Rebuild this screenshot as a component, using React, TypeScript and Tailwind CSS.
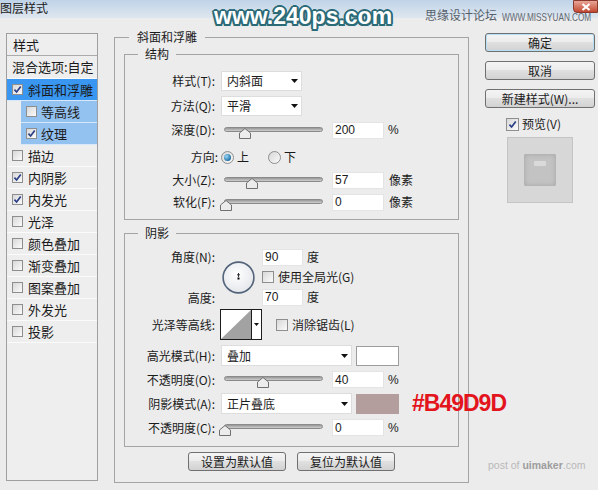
import type { ReactNode } from "react";

type Effect = { label: string; checked?: boolean; kind?: "active" | "sub" };

const effects: Effect[] = [
  { label: "斜面和浮雕", checked: true, kind: "active" },
  { label: "等高线", kind: "sub" },
  { label: "纹理", checked: true, kind: "sub" },
  { label: "描边" },
  { label: "内阴影", checked: true },
  { label: "内发光", checked: true },
  { label: "光泽" },
  { label: "颜色叠加" },
  { label: "渐变叠加" },
  { label: "图案叠加" },
  { label: "外发光" },
  { label: "投影" },
];

function Checkbox({ checked = false, className = "size-[12px]" }: { checked?: boolean; className?: string }) {
  return (
    <span
      className={`flex shrink-0 items-center justify-center border border-[#8e8e8e] bg-linear-to-br from-[#d8d8d8] to-[#fbfbfb] ${className}`}
    >
      {checked && (
        <svg viewBox="0 0 10 10" className="size-[9px]">
          <path d="M1.6 5.2 L4 7.8 L8.6 1.6" fill="none" stroke="#2a3f86" strokeWidth="1.9" />
        </svg>
      )}
    </span>
  );
}

function Radio({ checked = false }: { checked?: boolean }) {
  return (
    <span className="flex size-[13px] shrink-0 items-center justify-center rounded-full border border-[#8e8e8e] bg-linear-to-br from-[#d6d6d6] to-[#fbfbfb]">
      {checked && (
        <span className="size-[7px] rounded-full bg-[radial-gradient(circle_at_35%_35%,#9ad8f7,#1b6aa0_75%)]" />
      )}
    </span>
  );
}

function Caret() {
  return (
    <svg width="7" height="4" viewBox="0 0 7 4" className="shrink-0">
      <path d="M0 0H7L3.5 4Z" fill="#111" />
    </svg>
  );
}

function Select({ value, className }: { value: string; className: string }) {
  return (
    <div
      className={`flex shrink-0 items-center justify-between border border-[#dddddd] bg-white pl-[5px] pr-[3px] ${className}`}
    >
      <span>{value}</span>
      <Caret />
    </div>
  );
}

function NumField({ value, className = "w-[52px]" }: { value: string; className?: string }) {
  return (
    <div
      className={`flex h-[17px] shrink-0 items-center border border-[#e4e4e4] bg-white pl-[2px] font-['Liberation_Sans',sans-serif] text-[12px] ${className}`}
    >
      {value}
    </div>
  );
}

// pos = thumb centre, px from the start of the track
function Slider({ pos }: { pos: number }) {
  return (
    <div className="relative ml-[9px] h-[17px] w-[99px] shrink-0">
      <div className="mt-[5px] h-[5px] rounded-full border border-[#8a8a8a] bg-linear-to-b from-[#979797] to-[#cfcfcf]" />
      <svg className="absolute top-[6px] h-[11px] w-[12px]" style={{ left: pos - 6 }} viewBox="0 0 12 11">
        <path d="M6 0.5 L11.5 5 L11.5 10.5 L0.5 10.5 L0.5 5 Z" fill="#ececec" stroke="#707070" />
      </svg>
    </div>
  );
}

function Label({ children, className = "w-[90px]" }: { children: ReactNode; className?: string }) {
  return <span className={`shrink-0 text-right ${className}`}>{children}</span>;
}

function Box({ legend, className, children }: { legend: string; className: string; children: ReactNode }) {
  return (
    <div className={`relative flex flex-col border border-[#a4a4a4] ${className}`}>
      <span className="absolute -top-[9px] left-[13px] bg-[#ececec] px-[7px] leading-[16px]">{legend}</span>
      {children}
    </div>
  );
}

function Btn({ children, className }: { children: ReactNode; className: string }) {
  return (
    <div
      className={`flex shrink-0 items-center justify-center rounded-[3px] border border-[#707070] bg-[linear-gradient(#f4f4f4,#ececec_45%,#e0e0e0_50%,#d2d2d2)] leading-none ${className}`}
    >
      {children}
    </div>
  );
}

function EffectRow({ label, checked, kind }: Effect) {
  if (kind === "sub") {
    return (
      <div className="flex h-[22px] shrink-0 pl-[14px]">
        <div className="flex flex-1 items-center border-b border-[#d6e8fa] bg-[#93c1f0] pl-[5px]">
          <Checkbox checked={checked} className="size-[11px]" />
          <span className="ml-[4px]">{label}</span>
        </div>
      </div>
    );
  }
  return (
    <div
      className={
        kind === "active"
          ? "flex h-[22px] shrink-0 items-center border-b border-[#d6e8fa] bg-[#3996f1] pl-[5px]"
          : "flex h-[22px] shrink-0 items-center border-b border-[#fbfbfb] pl-[5px]"
      }
    >
      <Checkbox checked={checked} className="size-[11px]" />
      <span className="ml-[5px]">{label}</span>
    </div>
  );
}

function Dial() {
  return (
    <svg width="33" height="33" viewBox="0 0 33 33" className="shrink-0 self-center">
      <defs>
        <radialGradient id="dial" cx="45%" cy="40%" r="65%">
          <stop offset="0" stopColor="#ffffff" />
          <stop offset="1" stopColor="#e2e5ea" />
        </radialGradient>
      </defs>
      <circle cx="16.5" cy="16.5" r="15.4" fill="url(#dial)" stroke="#53647a" strokeWidth="1.6" />
      <path d="M16.5 12 V16 M15 13.8 H18" stroke="#333" strokeWidth="1" />
      <rect x="15.5" y="16.5" width="2" height="2" fill="#000" />
    </svg>
  );
}

function Contour() {
  return (
    <div className="ml-[5px] flex h-[31px] w-[42px] shrink-0 border border-[#1c1c1c] bg-white">
      <svg className="h-full w-[30px]" viewBox="0 0 30 29" preserveAspectRatio="none">
        <path d="M0 29 L30 0 L30 29 Z" fill="#a2a2a2" />
      </svg>
      <div className="flex flex-1 items-center justify-center border-l border-[#1c1c1c]">
        <svg width="5" height="3" viewBox="0 0 5 3">
          <path d="M0 0H5L2.5 3Z" fill="#111" />
        </svg>
      </div>
    </div>
  );
}

export default function App() {
  return (
    <div className="relative h-[490px] w-[598px] overflow-hidden bg-[#ececec] font-['Noto_Sans_CJK_SC',sans-serif] text-[12px] text-[#1b1b1b]">
      {/* title bar */}
      <div className="flex h-[18px] items-start justify-between bg-linear-to-b from-[#bfd3e8] to-[#dfe7ef]">
        <span className="leading-[15px] text-[#202020]">图层样式</span>
        <div className="flex h-[13px] w-[25px] items-center justify-center rounded-bl-[4px] border border-[#8a3a2c] bg-linear-to-b from-[#e8a597] to-[#c14630]">
          <svg width="10" height="8" viewBox="0 0 10 8">
            <path d="M1.5 1 L8.5 7 M8.5 1 L1.5 7" stroke="#fff" strokeWidth="2.2" />
          </svg>
        </div>
      </div>

      <div className="flex items-start pt-[15px]">
        {/* effect list */}
        <div className="ml-[6px] flex h-[448px] w-[92px] shrink-0 flex-col border border-[#9f9f9f] bg-[#eeeeee] text-[13px]">
          <div className="flex h-[22px] shrink-0 items-center border-b border-[#ababab] pl-[6px]">样式</div>
          <div className="flex h-[23px] shrink-0 items-center border-b border-[#fbfbfb] pl-[5px]">混合选项:自定</div>
          {effects.map((e) => (
            <EffectRow key={e.label} {...e} />
          ))}
        </div>

        {/* bevel & emboss */}
        <div className="relative ml-[16px] mt-[4px] flex h-[446px] w-[355px] shrink-0 flex-col border border-[#a4a4a4] px-[9px] pt-[16px]">
          <span className="absolute -top-[9px] left-[14px] bg-[#ececec] px-[8px] leading-[16px]">斜面和浮雕</span>

          <Box legend="结构" className="h-[166px] pt-[16px]">
            <div className="flex h-[20px] items-center">
              <Label>样式(T):</Label>
              <Select value="内斜面" className="ml-[6px] h-[20px] w-[81px]" />
            </div>
            <div className="mt-[5px] flex h-[20px] items-center">
              <Label>方法(Q):</Label>
              <Select value="平滑" className="ml-[6px] h-[20px] w-[81px]" />
            </div>
            <div className="mt-[5px] flex h-[18px] items-center">
              <Label>深度(D):</Label>
              <Slider pos={21} />
              <NumField value="200" className="ml-[9px] w-[52px]" />
              <span className="ml-[4px] font-['Liberation_Sans',sans-serif]">%</span>
            </div>
            <div className="mt-[9px] flex h-[18px] items-center">
              <Label className="w-[93px]">方向:</Label>
              <span className="ml-[3px]">
                <Radio checked />
              </span>
              <span className="ml-[3px]">上</span>
              <span className="ml-[19px]">
                <Radio />
              </span>
              <span className="ml-[3px]">下</span>
            </div>
            <div className="mt-[5px] flex h-[18px] items-center">
              <Label>大小(Z):</Label>
              <Slider pos={28} />
              <NumField value="57" className="ml-[9px] w-[52px]" />
              <span className="ml-[5px]">像素</span>
            </div>
            <div className="mt-[4px] flex h-[18px] items-center">
              <Label>软化(F):</Label>
              <Slider pos={2} />
              <NumField value="0" className="ml-[9px] w-[52px]" />
              <span className="ml-[5px]">像素</span>
            </div>
          </Box>

          <Box legend="阴影" className="mt-[13px] h-[214px] pt-[14px]">
            <div className="flex h-[58px]">
              <div className="flex w-[90px] shrink-0 flex-col justify-between text-right leading-[17px]">
                <span>角度(N):</span>
                <span>高度:</span>
              </div>
              <span className="ml-[7px] flex items-center">
                <Dial />
              </span>
              <div className="ml-[7px] flex flex-col justify-between">
                <div className="flex items-center">
                  <NumField value="90" className="w-[41px]" />
                  <span className="ml-[4px]">度</span>
                </div>
                <div className="flex items-center">
                  <Checkbox />
                  <span className="ml-[4px]">使用全局光(G)</span>
                </div>
                <div className="flex items-center">
                  <NumField value="70" className="w-[41px]" />
                  <span className="ml-[4px]">度</span>
                </div>
              </div>
            </div>
            <div className="mt-[3px] flex h-[31px] items-center">
              <Label>光泽等高线:</Label>
              <Contour />
              <span className="ml-[14px]">
                <Checkbox />
              </span>
              <span className="ml-[4px]">消除锯齿(L)</span>
            </div>
            <div className="mt-[5px] flex h-[21px] items-center">
              <Label>高光模式(H):</Label>
              <Select value="叠加" className="ml-[6px] h-[21px] w-[131px]" />
              <div className="ml-[4px] h-[20px] w-[43px] shrink-0 border border-[#9c9c9c] bg-white" />
            </div>
            <div className="mt-[5px] flex h-[17px] items-center">
              <Label>不透明度(O):</Label>
              <Slider pos={39} />
              <NumField value="40" className="ml-[9px] w-[52px]" />
              <span className="ml-[4px] font-['Liberation_Sans',sans-serif]">%</span>
            </div>
            <div className="mt-[5px] flex h-[21px] items-center">
              <Label>阴影模式(A):</Label>
              <Select value="正片叠底" className="ml-[6px] h-[21px] w-[131px]" />
              <div className="ml-[4px] h-[20px] w-[43px] shrink-0 bg-[#b49d9d]" />
              <span className="ml-[13px] shrink-0 whitespace-nowrap font-['Liberation_Sans',sans-serif] text-[23px] font-bold leading-none tracking-[-1px] text-[#e3141c]">
                #B49D9D
              </span>
            </div>
            <div className="mt-[5px] flex h-[17px] items-center">
              <Label>不透明度(C):</Label>
              <Slider pos={1} />
              <NumField value="0" className="ml-[9px] w-[52px]" />
              <span className="ml-[4px] font-['Liberation_Sans',sans-serif]">%</span>
            </div>
          </Box>

          <div className="mt-[5px] flex h-[19px] pl-[64px]">
            <Btn className="h-[19px] w-[98px]">设置为默认值</Btn>
            <Btn className="ml-[11px] h-[19px] w-[98px]">复位为默认值</Btn>
          </div>
        </div>

        {/* right column */}
        <div className="ml-[16px] flex w-[110px] shrink-0 flex-col">
          <Btn className="h-[19px] w-[110px] border-[#3a88ba] shadow-[inset_0_0_0_1px_#b3e0f5]">确定</Btn>
          <Btn className="mt-[9px] h-[19px] w-[110px]">取消</Btn>
          <Btn className="mt-[9px] h-[19px] w-[110px]">新建样式(W)...</Btn>
          <div className="mt-[9px] flex h-[14px] items-center pl-[21px]">
            <Checkbox checked className="size-[13px]" />
            <span className="ml-[3px]">预览(V)</span>
          </div>
          <div className="ml-[22px] mt-[6px] flex h-[66px] w-[66px] items-center justify-center border border-[#c4c4c4] bg-[#d7d7d7]">
            <div className="flex size-[32px] justify-center rounded-[2px] bg-[#c3c3c3] shadow-[inset_0_0_5px_#a2a2a2]">
              <div className="mt-[7px] h-[5px] w-[12px] rounded-[1px] bg-[#dadada]" />
            </div>
          </div>
        </div>
      </div>

      {/* watermarks */}
      <span className="absolute left-[214px] top-[5px] font-['Liberation_Sans',sans-serif] text-[23px] font-bold leading-[23px] text-white [text-shadow:2px_0_0_#2b6a77,-2px_0_0_#2b6a77,0_2px_0_#2b6a77,0_-2px_0_#2b6a77,1.5px_1.5px_0_#2b6a77,-1.5px_1.5px_0_#2b6a77,1.5px_-1.5px_0_#2b6a77,-1.5px_-1.5px_0_#2b6a77,0_0_5px_#cfe3e6]">
        www.240ps.com
      </span>
      <span className="absolute left-[425px] top-[7px] text-[12px] leading-[16px] text-[#56606b]">思缘设计论坛</span>
      <span className="absolute left-[502px] top-[11px] origin-left scale-x-[0.78] whitespace-nowrap font-['Liberation_Sans',sans-serif] text-[10.5px] leading-[12px] text-[#5f6872]">
        WWW.MISSYUAN.COM
      </span>
      <span className="absolute left-[488px] top-[458px] font-['Liberation_Sans',sans-serif] text-[10.5px] leading-[14px] text-[#b9b9b9]">
        post of <span className="font-bold text-[#9d9d9d]">uimaker</span>.com
      </span>
    </div>
  );
}
